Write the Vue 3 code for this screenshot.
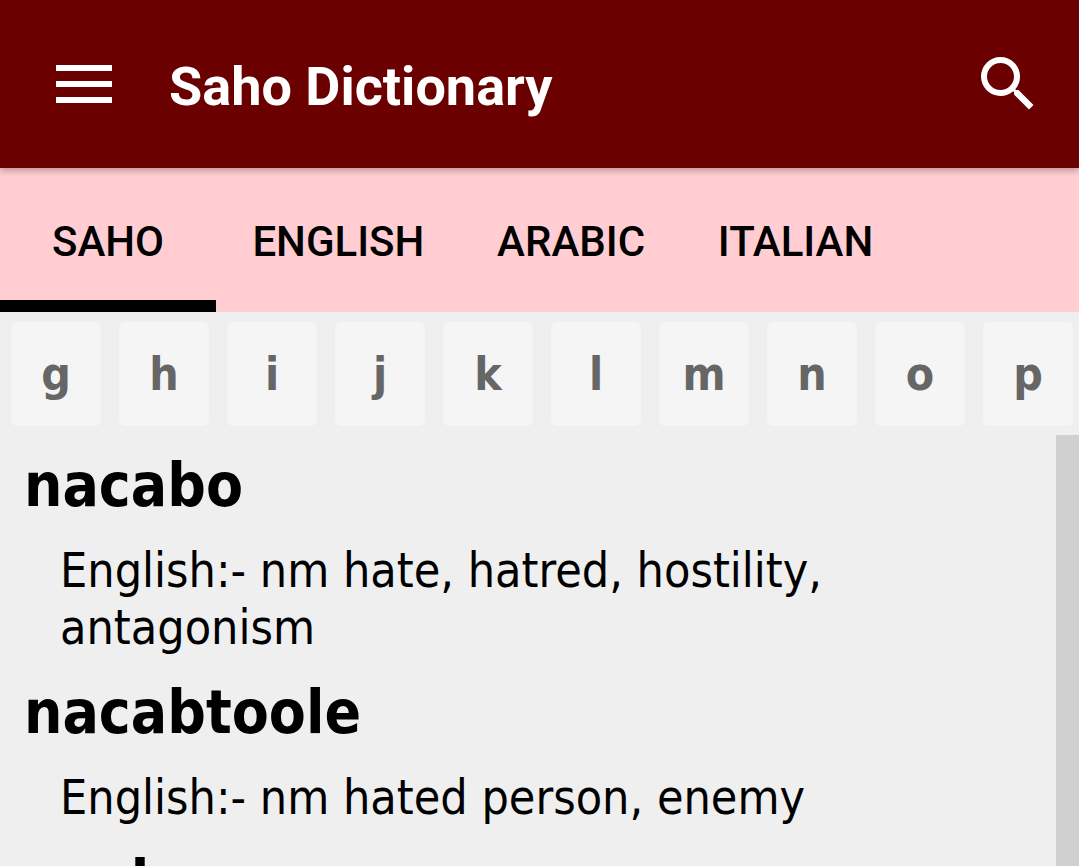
<template>
  <div class="page">
    <header class="toolbar">
      <svg class="menu-icon" width="56" height="38" viewBox="0 0 56 38" fill="#fff">
        <rect x="0" y="0" width="56" height="6" />
        <rect x="0" y="16" width="56" height="6" />
        <rect x="0" y="32" width="56" height="6" />
      </svg>
      <h1 class="title">Saho Dictionary</h1>
      <svg class="search-icon" width="72" height="72" viewBox="0 0 24 24" fill="#fff">
        <path d="M15.5 14h-.79l-.28-.27A6.47 6.47 0 0 0 16 9.5 6.5 6.5 0 1 0 9.5 16c1.61 0 3.09-.59 4.23-1.57l.27.28v.79l5 4.99L20.49 19l-4.99-5zm-6 0C7.01 14 5 11.99 5 9.5S7.01 5 9.5 5 14 7.01 14 9.5 11.99 14 9.5 14z" />
      </svg>
    </header>

    <nav class="tabs">
      <div
        v-for="(tab, i) in tabs"
        :key="tab"
        class="tab"
        :class="{ active: i === 0 }"
      >
        {{ tab }}
      </div>
    </nav>

    <div class="letters">
      <div v-for="l in letters" :key="l" class="letter">{{ l }}</div>
    </div>

    <div class="content">
      <div class="list">
        <div v-for="e in entries" :key="e.word" class="entry">
          <div class="word">{{ e.word }}</div>
          <div v-if="e.meaning" class="meaning">{{ e.meaning }}</div>
        </div>
      </div>
      <div class="scrollbar"></div>
    </div>
  </div>
</template>

<script setup>
const tabs = ['SAHO', 'ENGLISH', 'ARABIC', 'ITALIAN']
const letters = ['g', 'h', 'i', 'j', 'k', 'l', 'm', 'n', 'o', 'p']
const entries = [
  { word: 'nacabo', meaning: 'English:- nm hate, hatred, hostility, antagonism' },
  { word: 'nacabtoole', meaning: 'English:- nm hated person, enemy' },
  { word: 'nacbe', meaning: '' }
]
</script>

<style>
html, body {
  margin: 0;
  overflow: hidden;
  background: #efefef;
}
</style>

<style scoped>
.page {
  height: 866px;
  overflow: hidden;
  display: flex;
  flex-direction: column;
  background: #efefef;
}
.toolbar {
  position: relative;
  z-index: 1;
  flex: none;
  height: 168px;
  display: flex;
  align-items: center;
  padding: 0 35px 0 56px;
  background: #6b0000;
  box-shadow: 0 3px 6px rgba(0, 0, 0, 0.25);
}
.menu-icon {
  flex: none;
}
.title {
  flex: 1;
  margin: 4px 0 0 57px;
  font-family: Roboto, sans-serif;
  font-size: 54px;
  font-weight: 700;
  color: #fff;
}
.search-icon {
  flex: none;
}
.tabs {
  flex: none;
  height: 144px;
  display: flex;
  background: #ffcdd2;
}
.tab {
  box-sizing: border-box;
  height: 144px;
  padding: 50px 36.4px 0;
  font-family: Roboto, sans-serif;
  font-size: 42px;
  line-height: 48px;
  font-weight: 500;
  color: #000;
  text-align: center;
}
.tab.active {
  min-width: 216px;
  border-bottom: 12px solid #000;
}
.letters {
  flex: none;
  display: flex;
  gap: 18px;
  padding: 10px 0 9px 11px;
  overflow: hidden;
}
.letter {
  flex: none;
  width: 90px;
  height: 104px;
  display: flex;
  align-items: center;
  justify-content: center;
  border-radius: 6px;
  background: #f5f5f5;
  font-family: "DejaVu Sans Condensed", "DejaVu Sans", sans-serif;
  font-stretch: condensed;
  font-size: 46px;
  font-weight: 700;
  color: #666;
}
.content {
  flex: 1;
  min-height: 0;
  display: flex;
}
.list {
  flex: 1;
  min-width: 0;
  padding: 12px 24px 0;
  font-family: "DejaVu Sans Condensed", "DejaVu Sans", sans-serif;
  font-stretch: condensed;
  color: #000;
}
.word {
  font-size: 60px;
  line-height: 76px;
  font-weight: 700;
}
.meaning {
  margin-top: 19px;
  margin-bottom: 18px;
  padding-left: 36px;
  font-size: 48px;
  line-height: 57px;
}
.scrollbar {
  flex: none;
  width: 23px;
  background: #d0d0d0;
}
</style>
